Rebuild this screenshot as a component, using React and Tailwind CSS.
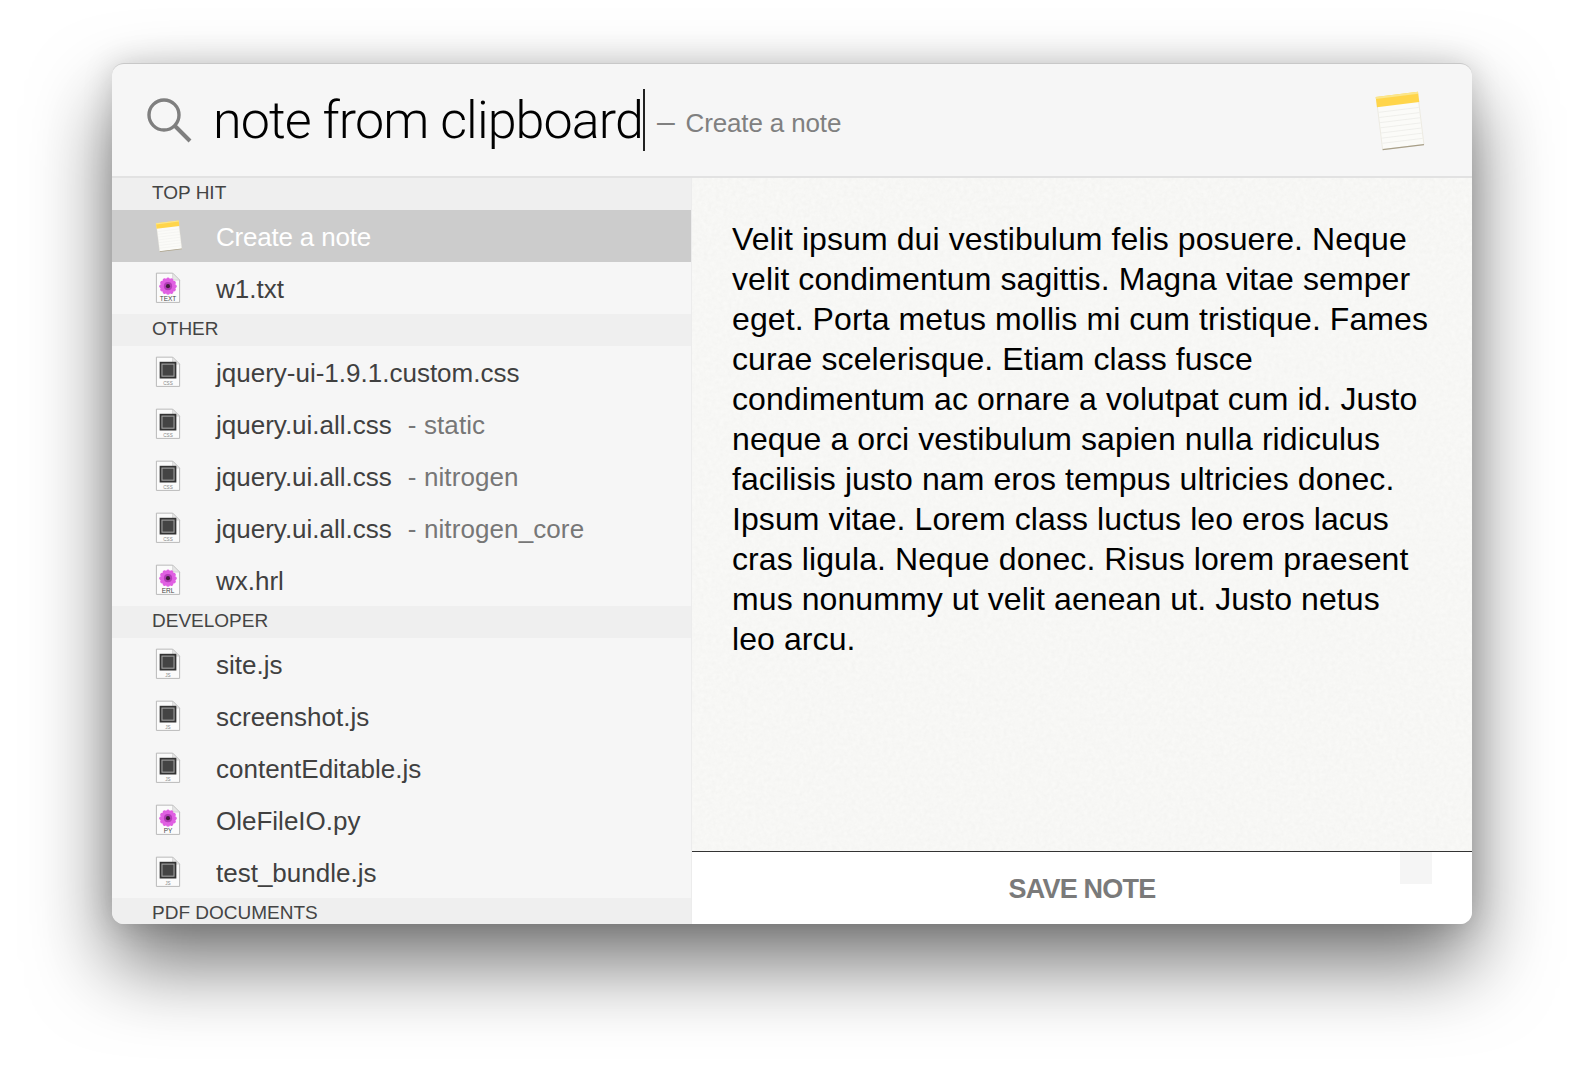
const sans = { fontFamily: '"Liberation Sans", Arial, sans-serif' };

const NoteIcon = ({ size, className = "" }) => (
  <svg width={size} height={size * 1.2} viewBox="0 0 50 60" className={className}>
    <g transform="rotate(-7 25 30)">
      <rect x="5" y="6" width="40" height="50" fill="#fbfbf8" stroke="#e6e3d8" strokeWidth="0.6" />
      <rect x="5" y="55.5" width="40" height="1.2" fill="#a89f88" />
      {[20, 25, 30, 35, 40, 45, 50].map((y) => (
        <line key={y} x1="5.5" x2="44.5" y1={y} y2={y} stroke="#ebebe8" strokeWidth="0.7" />
      ))}
      <rect x="4.5" y="5" width="41" height="10" fill="#ffd54a" />
      <rect x="4.5" y="5" width="41" height="2" fill="#fbe68c" />
    </g>
  </svg>
);

const Page = ({ children }) => (
  <svg width="26" height="32" viewBox="0 0 28 34">
    <path d="M1.5 1 H19 L26.5 8.5 V32.5 H1.5 Z" fill="#fbfbfb" stroke="#b4b4b4" strokeWidth="1" />
    <path d="M19 1 V8.5 H26.5 Z" fill="#e6e6e6" stroke="#c0c0c0" strokeWidth="0.6" />
    {children}
  </svg>
);

const petals = [0, 30, 60, 90, 120, 150, 180, 210, 240, 270, 300, 330];

const FlowerIcon = ({ label }) => (
  <Page>
    {petals.map((a) => (
      <ellipse key={a} cx="14" cy="9.4" rx="2.4" ry="3.8" fill="#e060e2" transform={`rotate(${a} 14 15)`} />
    ))}
    <circle cx="14" cy="15" r="4.4" fill="#b33cb8" />
    <circle cx="14" cy="15" r="2.2" fill="#40203a" />
    <text x="14" y="31" textAnchor="middle" fontSize="7" fill="#444" style={sans}>
      {label}
    </text>
  </Page>
);

const CodeIcon = ({ label }) => (
  <Page>
    <rect x="5" y="6" width="18" height="18" fill="#333333" />
    <rect x="7.5" y="8.5" width="13" height="13" fill="#444444" stroke="#a0a0a0" strokeWidth="1.2" />
    <text x="14" y="30.5" textAnchor="middle" fontSize="5" fill="#888" style={sans}>
      {label}
    </text>
  </Page>
);

const sections = [
  {
    title: "TOP HIT",
    rows: [
      { name: "Create a note", note: true, active: true },
      { name: "w1.txt", flower: "TEXT" },
    ],
  },
  {
    title: "OTHER",
    rows: [
      { name: "jquery-ui-1.9.1.custom.css", code: "CSS" },
      { name: "jquery.ui.all.css", sub: "- static", code: "CSS" },
      { name: "jquery.ui.all.css", sub: "- nitrogen", code: "CSS" },
      { name: "jquery.ui.all.css", sub: "- nitrogen_core", code: "CSS" },
      { name: "wx.hrl", flower: "ERL" },
    ],
  },
  {
    title: "DEVELOPER",
    rows: [
      { name: "site.js", code: "JS" },
      { name: "screenshot.js", code: "JS" },
      { name: "contentEditable.js", code: "JS" },
      { name: "OleFileIO.py", flower: "PY" },
      { name: "test_bundle.js", code: "JS" },
    ],
  },
  { title: "PDF DOCUMENTS", rows: [] },
];

const bodyText =
  "Velit ipsum dui vestibulum felis posuere. Neque velit condimentum sagittis. Magna vitae semper eget. Porta metus mollis mi cum tristique. Fames curae scelerisque. Etiam class fusce condimentum ac ornare a volutpat cum id. Justo neque a orci vestibulum sapien nulla ridiculus facilisis justo nam eros tempus ultricies donec. Ipsum vitae. Lorem class luctus leo eros lacus cras ligula. Neque donec. Risus lorem praesent mus nonummy ut velit aenean ut. Justo netus leo arcu.";

const ResultRow = ({ row }) => (
  <div className={`h-[52px] flex items-center ${row.active ? "bg-[#cccccc]" : ""}`}>
    <div className="w-[104px] pl-[43px] flex items-center shrink-0">
      {row.note && <NoteIcon size={28} />}
      {row.flower && <FlowerIcon label={row.flower} />}
      {row.code && <CodeIcon label={row.code} />}
    </div>
    <span className={`text-[26px] mt-[2px] ${row.active ? "text-white tracking-[-0.2px]" : "text-[#404040]"}`}>{row.name}</span>
    {row.sub && <span className="text-[26px] mt-[2px] text-[#777777] ml-[16px] tracking-[0.1px]">{row.sub}</span>}
  </div>
);

export default function App() {
  return (
    <div className="min-h-[1084px] bg-white pt-[63px] pl-[112px] overflow-hidden" style={sans}>
      <div className="w-[1360px] h-[861px] rounded-[12px] overflow-hidden bg-[#f6f6f6] border-t border-[#c8c8c8] flex flex-col shadow-[0_40px_80px_rgba(0,0,0,0.55),0_0_30px_rgba(0,0,0,0.15)]">
        <header className="h-[114px] shrink-0 flex items-center border-b-2 border-[#e2e2e2] pl-[34px] pr-[46px]">
          <svg width="46" height="46" viewBox="0 0 46 46" fill="none" stroke="#7f7f7f" className="shrink-0">
            <circle cx="18" cy="18" r="15" strokeWidth="3.4" />
            <line x1="29" y1="29" x2="44" y2="44" strokeWidth="4" />
          </svg>
          <span className="ml-[21px] mt-[1px] text-[52px] font-light tracking-[-0.9px] text-black" style={{ fontFamily: '"Roboto", sans-serif' }}>
            note from clipboard
          </span>
          <span className="w-[2px] h-[62px] bg-[#222222]" />
          <span className="ml-[12px] mt-[6px] text-[26px] text-[#808080] flex items-baseline tracking-[-0.15px]">
            <span className="text-[32px] leading-none">–</span>
            <span className="ml-[11px]">Create a note</span>
          </span>
          <NoteIcon size={52} className="ml-auto" />
        </header>
        <div className="flex-1 min-h-0 flex">
          <aside className="w-[580px] shrink-0 overflow-hidden border-r border-[#ececec]">
            {sections.map((s) => (
              <section key={s.title}>
                <h2 className="h-[32px] leading-[30px] pl-[40px] bg-[#efefef] text-[19px] text-[#444444]">{s.title}</h2>
                {s.rows.map((r) => (
                  <ResultRow key={r.name + (r.sub || "")} row={r} />
                ))}
              </section>
            ))}
          </aside>
          <main className="flex-1 flex flex-col min-w-0">
            <div className="relative flex-1 min-h-0 bg-[#f9f9f7] pl-[40px] pr-[42px] pt-[41px] overflow-hidden">
              <svg className="absolute inset-0 w-full h-full opacity-[0.18]">
                <filter id="paper">
                  <feTurbulence type="fractalNoise" baseFrequency="0.25" numOctaves="3" seed="4" />
                  <feColorMatrix values="0 0 0 0 0.6  0 0 0 0 0.6  0 0 0 0 0.58  0.6 0.6 0 0 -0.35" />
                </filter>
                <rect width="100%" height="100%" filter="url(#paper)" />
              </svg>
              <p className="relative text-[32px] leading-[40px] text-black tracking-[0.09px]">{bodyText}</p>
            </div>
            <div className="relative h-[73px] shrink-0 bg-white border-t border-[#333333] flex items-center justify-center">
              <span className="text-[27px] mt-[3px] font-bold text-[#7a7a7a] tracking-[-0.8px]">SAVE NOTE</span>
              <div className="absolute top-0 right-[40px] w-[32px] h-[32px] bg-[#f5f5f5]" />
            </div>
          </main>
        </div>
      </div>
    </div>
  );
}
